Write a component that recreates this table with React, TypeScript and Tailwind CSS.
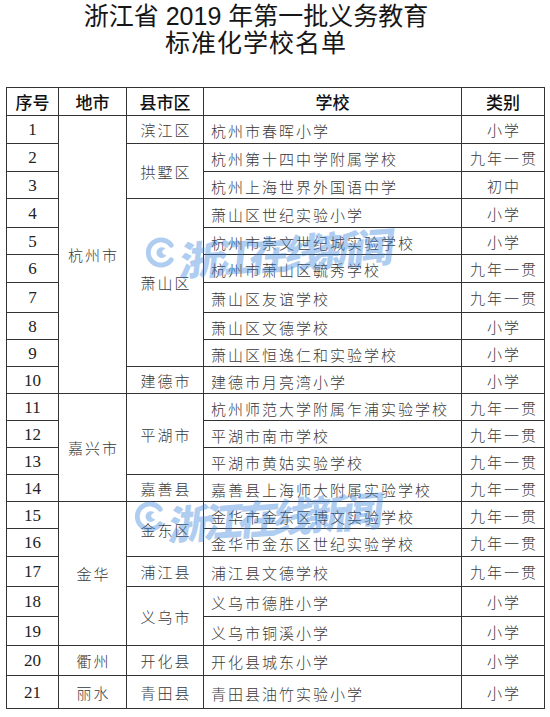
import React from "react";

type Row = {
  n: number;
  city?: { t: string; span: number };
  county?: { t: string; span: number };
  school: string;
  kind: string;
  h: number;
};

const rows: Row[] = [
  { n: 1, city: { t: "杭州市", span: 10 }, county: { t: "滨江区", span: 1 }, school: "杭州市春晖小学", kind: "小学", h: 28 },
  { n: 2, county: { t: "拱墅区", span: 2 }, school: "杭州第十四中学附属学校", kind: "九年一贯", h: 28 },
  { n: 3, school: "杭州上海世界外国语中学", kind: "初中", h: 27 },
  { n: 4, county: { t: "萧山区", span: 6 }, school: "萧山区世纪实验小学", kind: "小学", h: 29 },
  { n: 5, school: "杭州市崇文世纪城实验学校", kind: "小学", h: 27 },
  { n: 6, school: "杭州市萧山区毓秀学校", kind: "九年一贯", h: 28 },
  { n: 7, school: "萧山区友谊学校", kind: "九年一贯", h: 30 },
  { n: 8, school: "萧山区文德学校", kind: "小学", h: 27 },
  { n: 9, school: "萧山区恒逸仁和实验学校", kind: "小学", h: 27 },
  { n: 10, county: { t: "建德市", span: 1 }, school: "建德市月亮湾小学", kind: "小学", h: 27 },
  { n: 11, city: { t: "嘉兴市", span: 4 }, county: { t: "平湖市", span: 3 }, school: "杭州师范大学附属乍浦实验学校", kind: "九年一贯", h: 27 },
  { n: 12, school: "平湖市南市学校", kind: "九年一贯", h: 27 },
  { n: 13, school: "平湖市黄姑实验学校", kind: "九年一贯", h: 27 },
  { n: 14, county: { t: "嘉善县", span: 1 }, school: "嘉善县上海师大附属实验学校", kind: "九年一贯", h: 27 },
  { n: 15, city: { t: "金华", span: 5 }, county: { t: "金东区", span: 2 }, school: "金华市金东区博文实验学校", kind: "九年一贯", h: 27 },
  { n: 16, school: "金华市金东区世纪实验学校", kind: "九年一贯", h: 28 },
  { n: 17, county: { t: "浦江县", span: 1 }, school: "浦江县文德学校", kind: "九年一贯", h: 30 },
  { n: 18, county: { t: "义乌市", span: 2 }, school: "义乌市德胜小学", kind: "小学", h: 30 },
  { n: 19, school: "义乌市铜溪小学", kind: "小学", h: 29 },
  { n: 20, city: { t: "衢州", span: 1 }, county: { t: "开化县", span: 1 }, school: "开化县城东小学", kind: "小学", h: 30 },
  { n: 21, city: { t: "丽水", span: 1 }, county: { t: "青田县", span: 1 }, school: "青田县油竹实验小学", kind: "小学", h: 33 },
];

function Logo({ size }: { size: number }) {
  return (
    <svg width={size} height={size} viewBox="0 0 32 32">
      <path
        d="M26 8.5 A13 13 0 1 0 26 23.5"
        fill="none"
        stroke="#3a84da"
        strokeWidth="5"
        strokeLinecap="round"
      />
      <path
        d="M20 12 A5.5 5.5 0 1 0 21 19 Q17 18 16.5 15.5 Q17 13 20 12 Z"
        fill="#3a84da"
      />
    </svg>
  );
}

function Watermark({ left, top }: { left: number; top: number }) {
  return (
    <div
      className="absolute pointer-events-none flex items-center opacity-40"
      style={{ left, top }}
    >
      <Logo size={31} />
      <span className="ml-[3px] text-[40px] leading-none font-black tracking-[-5px] text-[#3a84da] -rotate-[4deg] -skew-x-[10deg] font-['Noto_Sans_CJK_SC',sans-serif]">
        浙江在线新闻
      </span>
    </div>
  );
}

const cell = "border border-[#333] p-0 text-center align-middle";
const body = "font-['Noto_Sans_CJK_SC',sans-serif] font-light text-[15px] tracking-[2px] text-[#3a3a3a] leading-none";

export default function App() {
  return (
    <div className="relative w-[550px] h-[717px] bg-white overflow-hidden">
      <div className="w-[512px] pt-[3px] text-center text-[25px] leading-[27px] text-[#161616] font-['Liberation_Sans','Noto_Sans_CJK_SC',sans-serif]">
        <div>浙江省 2019 年第一批义务教育</div>
        <div className="tracking-[1px]">标准化学校名单</div>
      </div>
      <table className="ml-[6px] mt-[30px] border-collapse table-fixed w-[538px]">
        <colgroup>
          <col className="w-[52px]" />
          <col className="w-[68px]" />
          <col className="w-[77px]" />
          <col className="w-[258px]" />
          <col className="w-[83px]" />
        </colgroup>
        <thead>
          <tr className="h-[28px] font-['Noto_Sans_CJK_SC',sans-serif] text-[17px] text-[#111] leading-none">
            <th className={`${cell} font-medium`}>序号</th>
            <th className={`${cell} font-medium`}>地市</th>
            <th className={`${cell} font-medium`}>县市区</th>
            <th className={`${cell} font-medium`}>学校</th>
            <th className={`${cell} font-medium`}>类别</th>
          </tr>
        </thead>
        <tbody>
          {rows.map((r) => (
            <tr key={r.n} style={{ height: r.h }}>
              <td className={`${cell} font-['Liberation_Serif',serif] text-[17px] text-[#222] leading-none`}>
                {r.n}
              </td>
              {r.city && (
                <td rowSpan={r.city.span} className={`${cell} ${body}`}>
                  <span className="mr-[-2px]">{r.city.t}</span>
                </td>
              )}
              {r.county && (
                <td rowSpan={r.county.span} className={`${cell} ${body}`}>
                  <span className="mr-[-2px]">{r.county.t}</span>
                </td>
              )}
              <td className={`${cell} ${body} text-left pl-[7px] pt-[2px]`}>{r.school}</td>
              <td className={`${cell} ${body}`}>
                <span className="mr-[-2px]">{r.kind}</span>
              </td>
            </tr>
          ))}
        </tbody>
      </table>
      <Watermark left={146} top={232} />
      <Watermark left={135} top={496} />
    </div>
  );
}
